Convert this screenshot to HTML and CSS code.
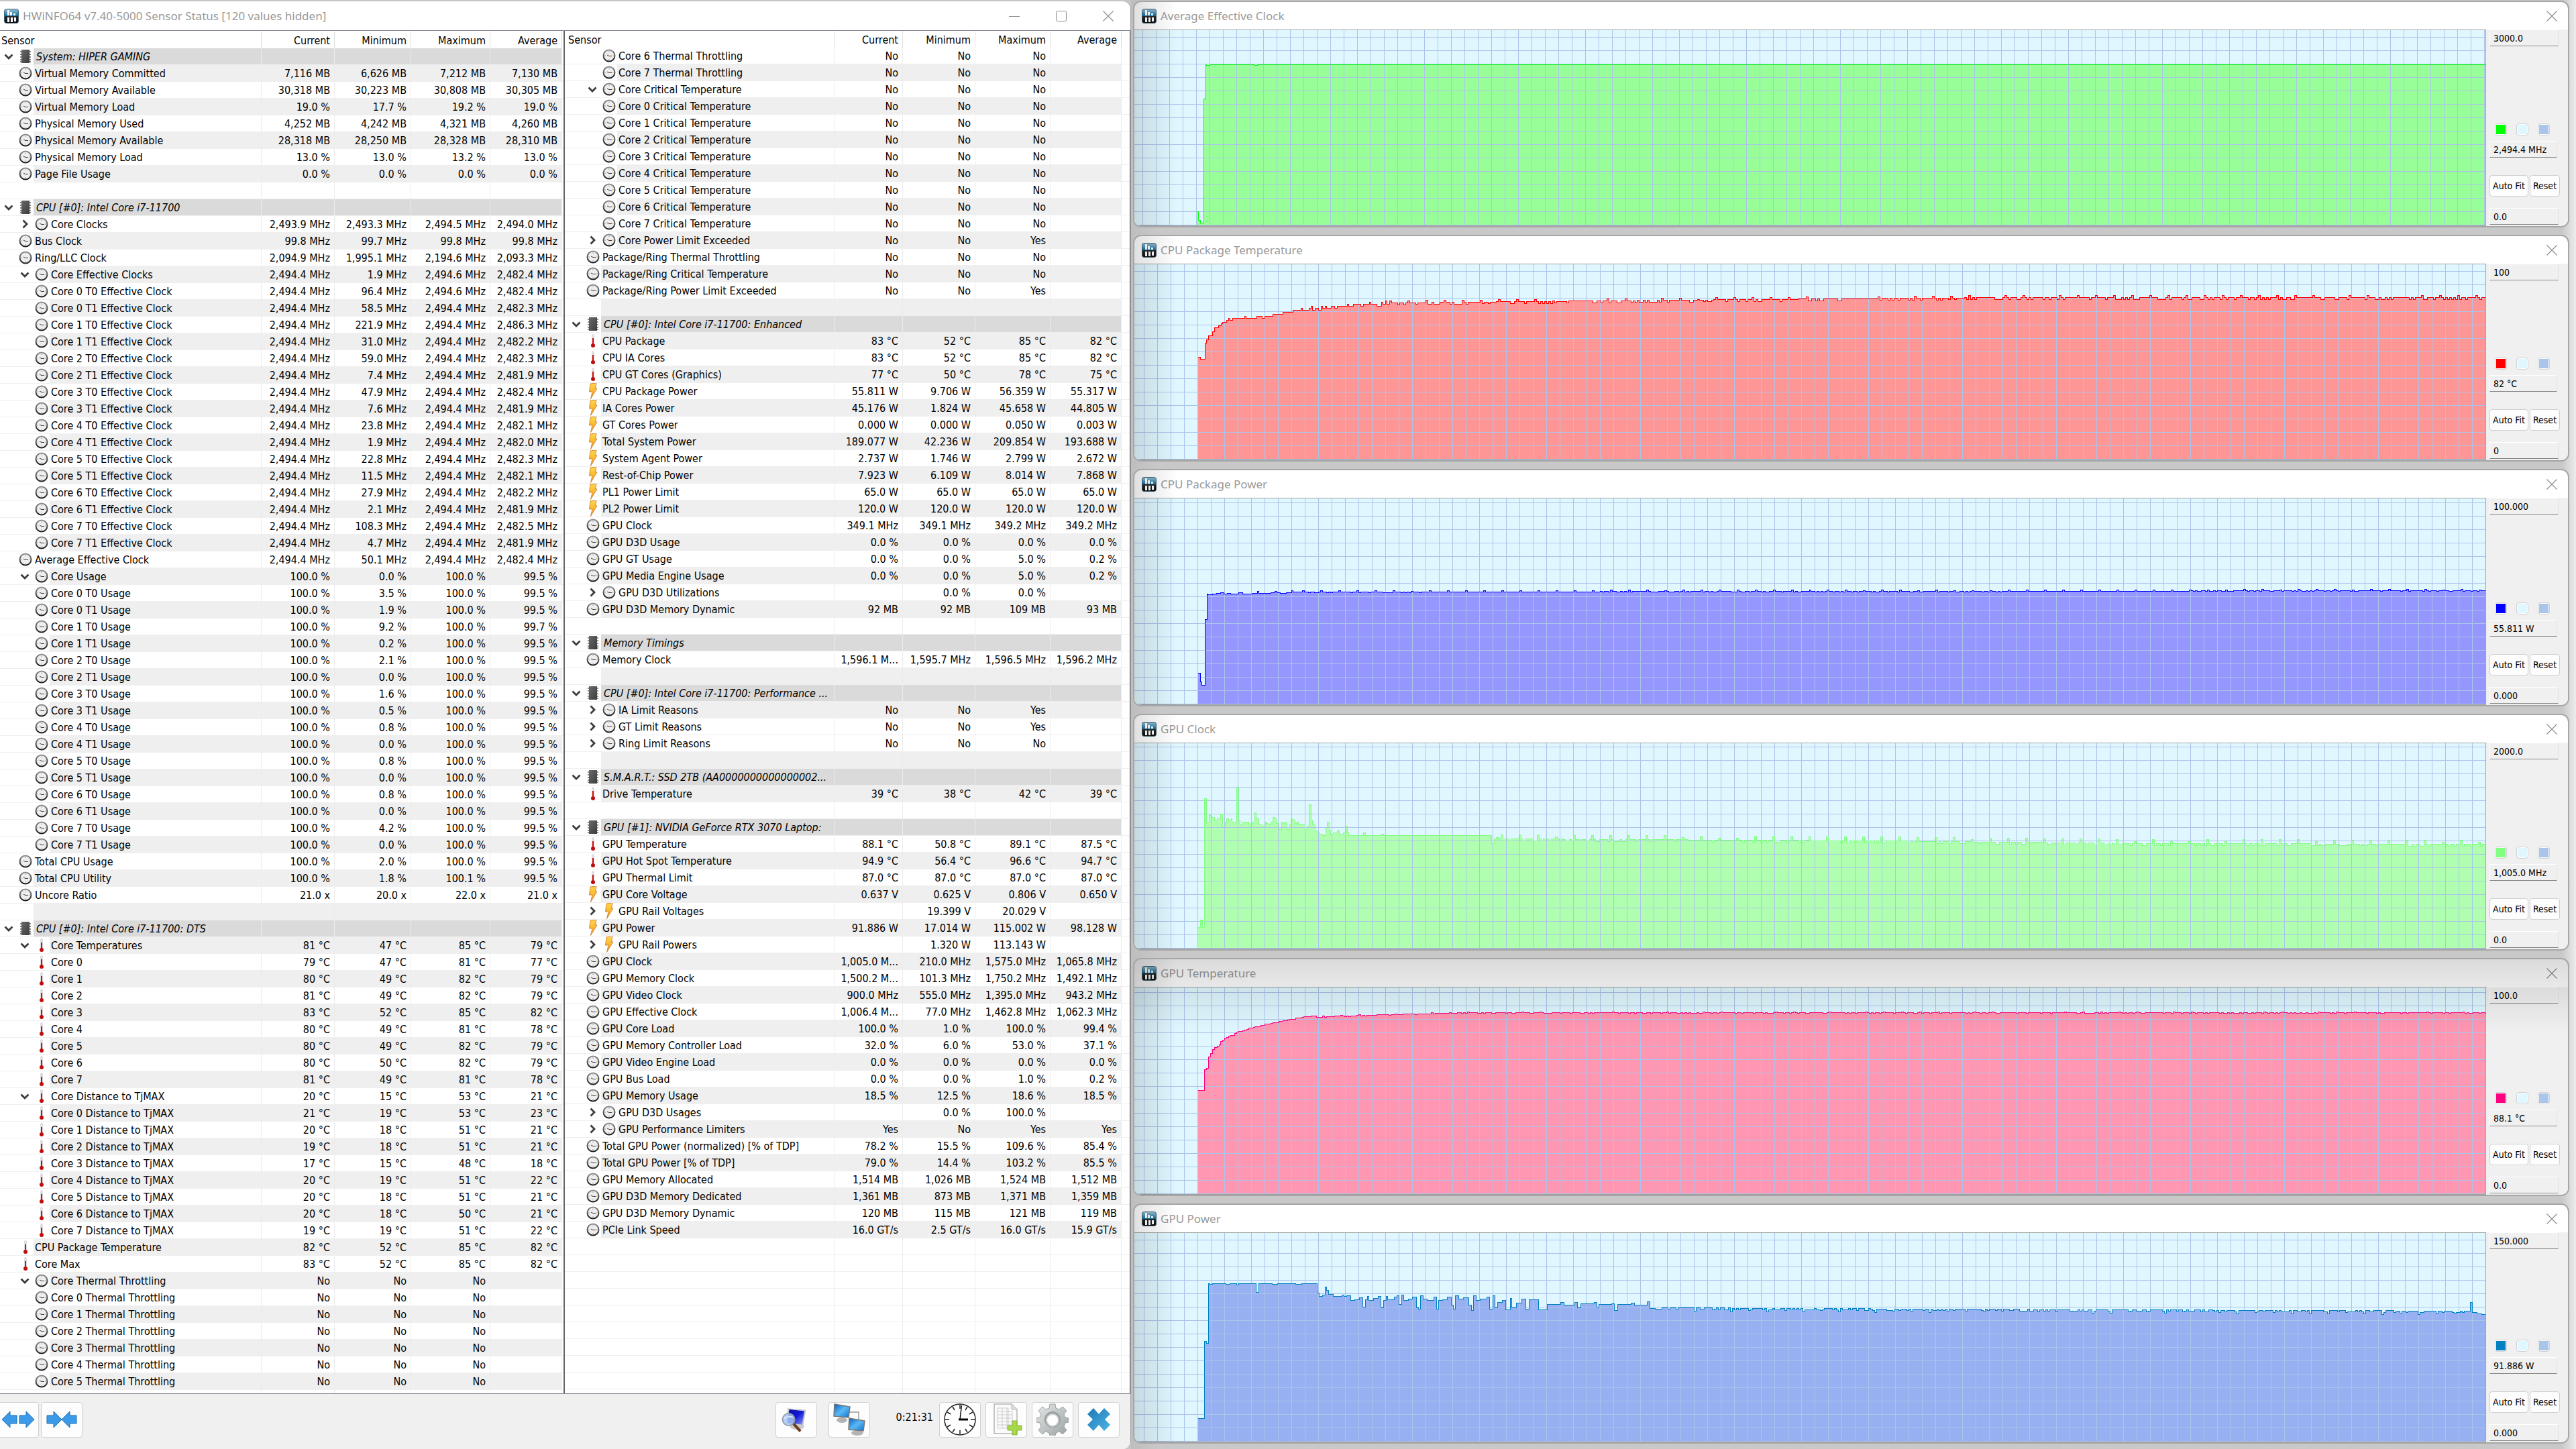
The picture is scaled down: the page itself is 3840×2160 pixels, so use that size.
FILE: index.html
```html
<!DOCTYPE html>
<html lang="en">
<head>
    <meta charset="UTF-8">
    <meta name="viewport" content="width=device-width, initial-scale=1.0">
    <title>HWiNFO64 Sensor Status</title>
    <link rel="stylesheet" href="styles.css">
</head>
<body>
    <svg class="sprite" aria-hidden="true">
        <defs>
            <linearGradient id="g-app" x1="0" y1="0" x2="0" y2="1">
                <stop offset="0" stop-color="#9cc3d8"/><stop offset="0.5" stop-color="#0b6c9c"/>
                <stop offset="0.52" stop-color="#2b2b2b"/><stop offset="1" stop-color="#0c0c0c"/>
            </linearGradient>
            <linearGradient id="g-chip" x1="0" y1="0" x2="1" y2="1">
                <stop offset="0" stop-color="#6a6a6a"/><stop offset="1" stop-color="#3c3c3c"/>
            </linearGradient>
            <linearGradient id="g-bolt" x1="0" y1="0" x2="0" y2="1">
                <stop offset="0" stop-color="#ffd84a"/><stop offset="1" stop-color="#f59a1c"/>
            </linearGradient>
            <linearGradient id="g-rim" x1="0" y1="0" x2="0" y2="1">
                <stop offset="0" stop-color="#8d8d8d"/><stop offset="1" stop-color="#1e1e1e"/>
            </linearGradient>
            <linearGradient id="g-screen" x1="0" y1="0" x2="1" y2="1">
                <stop offset="0" stop-color="#0a5fb8"/><stop offset="0.5" stop-color="#5cb8f4"/><stop offset="1" stop-color="#0d6fd0"/>
            </linearGradient>
            <linearGradient id="g-navy" x1="0" y1="0" x2="1" y2="1">
                <stop offset="0" stop-color="#0a0aa0"/><stop offset="0.5" stop-color="#1418d8"/><stop offset="1" stop-color="#8f9cf4"/>
            </linearGradient>
            <linearGradient id="g-gear" x1="0" y1="0" x2="1" y2="1">
                <stop offset="0" stop-color="#e4e8e8"/><stop offset="1" stop-color="#9aa0a0"/>
            </linearGradient>
            <linearGradient id="g-cross" x1="0" y1="0" x2="1" y2="1">
                <stop offset="0" stop-color="#1f78b4"/><stop offset="1" stop-color="#4cb4e8"/>
            </linearGradient>
        </defs>
        <symbol id="i-app" viewBox="0 0 22 22">
            <rect x="0.5" y="0.5" width="21" height="21" rx="3" fill="url(#g-app)" stroke="#3f6475"/>
            <path d="M5 2h3v8H5zM9 5h3v5H9zM14 7h3v3h-3zM5 13h3v7H5zM10 13h3v7h-3zM15 13h3v6h-3z" fill="#fff"/>
        </symbol>
        <symbol id="i-chip" viewBox="0 0 20 22">
            <path d="M2 4h16M2 8h16M2 12h16M2 16h16M2 19h16" stroke="#8a8a8a" stroke-width="2" stroke-dasharray="2 12 2 0"/>
            <rect x="4" y="1" width="12" height="20" fill="url(#g-chip)"/>
        </symbol>
        <symbol id="i-clock" viewBox="0 0 20 20">
            <circle cx="10" cy="10" r="8.500" fill="#eee" stroke="url(#g-rim)" stroke-width="2"/>
            <path d="M10 3.500v1.500M10 15v1.500M3.500 10H5M15 10h1.500" stroke="#999"/>
            <path d="M7 9l3 1.500h4" fill="none" stroke="#4a3a34"/>
        </symbol>
        <symbol id="i-temp" viewBox="0 0 20 20">
            <rect x="8" y="0" width="4" height="15" rx="2" fill="#dedede"/>
            <rect x="9" y="6" width="2" height="10" fill="#d01010"/>
            <circle cx="10" cy="17" r="3" fill="#c00c0c"/>
        </symbol>
        <symbol id="i-power" viewBox="0 0 20 24">
            <path d="M6 1l9 -1l-1.500 8h2.500L6.500 23.500L9 13H4.500z" fill="url(#g-bolt)" stroke="#c8742a" stroke-width="0.8"/>
        </symbol>
        <symbol id="i-down" viewBox="0 0 14 14">
            <path d="M1.500 4.500L7 10l5.500-5.500" fill="none" stroke="#3c3c3c" stroke-width="2.800"/>
        </symbol>
        <symbol id="i-right" viewBox="0 0 14 14">
            <path d="M4.500 1.500L10 7l-5.500 5.500" fill="none" stroke="#3c3c3c" stroke-width="2.800"/>
        </symbol>
        <symbol id="i-min" viewBox="0 0 16 16"><path d="M0 8.500h16" stroke="#8c8c8c" fill="none"/></symbol>
        <symbol id="i-max" viewBox="0 0 16 16"><rect x="0.500" y="0.500" width="15" height="15" rx="2" stroke="#8c8c8c" fill="none"/></symbol>
        <symbol id="i-close" viewBox="0 0 16 16"><path d="M0.500 0.500l15 15M15.500 0.500l-15 15" stroke="#8c8c8c" stroke-width="1.200" fill="none"/></symbol>
        <symbol id="i-expand" viewBox="0 0 48 28">
            <path d="M0 14L12 2v6h10v12H12v6zM48 14L36 2v6H26v12h10v6z" fill="#3b9be8" stroke="#1c6fb4"/>
        </symbol>
        <symbol id="i-shrink" viewBox="0 0 48 28">
            <path d="M24 14L12 2v6H2v12h10v6zM24 14L36 2v6h10v12H36v6z" fill="#3b9be8" stroke="#1c6fb4"/>
        </symbol>
        <symbol id="i-search" viewBox="0 0 48 48">
            <ellipse cx="29" cy="37" rx="13" ry="5" fill="#ccc"/>
            <path d="M12 4l33 3l-5 29l-30-4z" fill="#c4c8cc"/>
            <path d="M15 6l27 3l-4 24l-26-3z" fill="url(#g-navy)"/>
            <path d="M22 31l13 14" stroke="#6b3f1c" stroke-width="5"/>
            <circle cx="14" cy="24" r="11" fill="#a9c8f2" fill-opacity="0.85" stroke="#8d99a8" stroke-width="2"/>
            <path d="M6 22q8-5 16-2" stroke="#e8f2ff" stroke-width="2" fill="none"/>
        </symbol>
        <symbol id="i-network" viewBox="0 0 48 48">
            <path d="M24 13h14v12" fill="none" stroke="#999" stroke-width="1.500"/>
            <ellipse cx="13" cy="25" rx="8" ry="4" fill="#b4b4b4"/><ellipse cx="36" cy="44" rx="9" ry="4" fill="#b4b4b4"/>
            <path d="M2 1l23 4l-2 16l-22-2z" fill="url(#g-screen)" stroke="#777" stroke-width="1.500"/>
            <path d="M24 22l23 4l-2 15l-22-2z" fill="url(#g-screen)" stroke="#777" stroke-width="1.500"/>
        </symbol>
        <symbol id="i-bigclock" viewBox="0 0 48 48">
            <circle cx="24" cy="24" r="23" fill="#fff" stroke="#222" stroke-width="1.500"/>
            <path d="M24 2v6M24 40v6M2 24h6M40 24h6M13 5l3 5M35 5l-3 5M13 43l3-5M35 43l-3-5M5 13l5 3M43 13l-5 3M5 35l5-3M43 35l-5-3" stroke="#222" stroke-width="1.500"/>
            <path d="M24 24L26.500 3" stroke="#111" stroke-width="1.500"/>
            <path d="M22 24h14" stroke="#000" stroke-width="3"/>
        </symbol>
        <symbol id="i-report" viewBox="0 0 48 48">
            <path d="M6 1h26l8 8v36H6z" fill="#fafafa" stroke="#b4b4b4" stroke-width="1.500"/>
            <path d="M32 1v8h8" fill="#ddd" stroke="#b4b4b4"/>
            <path d="M11 7h16v30H11zM11 12h22M11 17h22M11 22h22M11 27h22M11 32h22M18 7v30M25 7v30M33 12v25" stroke="#ccc" fill="none"/>
            <path d="M33 26h7v7h7v7h-7v7h-7v-7h-7v-7h7z" fill="#a6d84a" stroke="#86b43a"/>
        </symbol>
        <symbol id="i-gear" viewBox="0 0 48 48">
            <path d="M20 1h8l1 6 5 2 5-4 6 6-4 5 2 5 5 1v6l-5 1-2 6 4 5-6 6-5-4-5 2-1 5h-8l-1-5-5-2-5 4-6-6 4-5-2-6-5-1v-6l5-1 2-5-4-5 6-6 5 4 5-2z" fill="url(#g-gear)" stroke="#9aa0a0"/>
            <circle cx="24" cy="24" r="12" fill="#9aa0a0"/>
            <circle cx="24" cy="25" r="9" fill="#fff" stroke="#ccc" stroke-width="2"/>
        </symbol>
        <symbol id="i-cross" viewBox="0 0 36 36">
            <path d="M10 1l8 9l8-9l9 9l-8 8l8 8l-9 9l-8-9l-8 9l-9-9l8-8l-8-8z" fill="url(#g-cross)"/>
        </symbol>
    </svg>

    <main class="desktop">
        <section class="window sensors">
            <header class="titlebar">
                <svg class="app-icon"><use href="#i-app"/></svg>
                <h1>HWiNFO64 v7.40-5000 Sensor Status [120 values hidden]</h1>
                <div class="window-buttons">
                    <button aria-label="Minimize"><svg><use href="#i-min"/></svg></button>
                    <button aria-label="Maximize"><svg><use href="#i-max"/></svg></button>
                    <button aria-label="Close"><svg><use href="#i-close"/></svg></button>
                </div>
            </header>
            <div class="lists">
                <div class="list list-left">
                    <table id="left">
                        <colgroup><col><col class="w109"><col class="w114"><col class="w118"><col class="w107"><col class="w2"></colgroup>
                        <thead><tr><th>Sensor</th><th>Current</th><th>Minimum</th><th>Maximum</th><th>Average</th><th></th></tr></thead>
                        <tbody></tbody>
                    </table>
                </div>
                <div class="list list-right">
                    <table id="right">
                        <colgroup><col><col class="w101"><col class="w108"><col class="w112"><col class="w106"><col class="w12"></colgroup>
                        <thead><tr><th>Sensor</th><th>Current</th><th>Minimum</th><th>Maximum</th><th>Average</th><th></th></tr></thead>
                        <tbody></tbody>
                    </table>
                </div>
            </div>
            <footer class="toolbar">
                <button class="tool tool-first" aria-label="Expand columns"><svg class="arrows"><use href="#i-expand"/></svg></button>
                <button class="tool" aria-label="Shrink columns"><svg class="arrows"><use href="#i-shrink"/></svg></button>
                <span class="spacer"></span>
                <button class="tool tool-search" aria-label="Find"><svg class="mid"><use href="#i-search"/></svg></button>
                <button class="tool tool-network" aria-label="Remote"><svg><use href="#i-network"/></svg></button>
                <time class="elapsed">0:21:31</time>
                <button class="tool" aria-label="Reset clock"><svg><use href="#i-bigclock"/></svg></button>
                <button class="tool" aria-label="Start logging"><svg><use href="#i-report"/></svg></button>
                <button class="tool" aria-label="Settings"><svg><use href="#i-gear"/></svg></button>
                <button class="tool" aria-label="Close"><svg class="small"><use href="#i-cross"/></svg></button>
            </footer>
        </section>
        <div class="graphs" id="graphs"></div>
    </main>

    <script src="data.js"></script>
    <script src="app.js"></script>
</body>
</html>
```
FILE: styles.css
```css
* {
    box-sizing: border-box;
}
body {
    margin: 0;
    font-family: "DejaVu Sans Condensed", "DejaVu Sans", sans-serif;
    font-size: 16px;
    color: #000;
    background-color: #c6c6c6;
}
button, input {
    font: inherit;
    color: inherit;
    margin: 0;
    padding: 0;
}
h1, h2 {
    margin: 0;
    font-family: "Noto Sans", "Open Sans", sans-serif;
    font-size: 17px;
    font-weight: normal;
    color: #999;
}
.sprite {
    position: absolute;
    width: 0;
    height: 0;
}
.desktop {
    display: grid;
    grid-template-columns: 1686fr 2154fr;
    height: 100vh;
}

/* windows */
.window {
    display: flex;
    flex-direction: column;
    min-height: 0;
    background-color: #fff;
    overflow: hidden;
}
.titlebar {
    display: flex;
    align-items: center;
    flex: none;
    height: 43px;
}
.app-icon {
    width: 22px;
    height: 22px;
    margin-right: 6px;
}
.window-buttons {
    display: flex;
    margin-left: auto;
    gap: 54px;
    padding-right: 25px;
}
.window-buttons button {
    display: flex;
    border: none;
    background: none;
}
.window-buttons svg {
    width: 16px;
    height: 16px;
}

/* sensor window */
.sensors {
    margin-top: 2px;
    border-radius: 0 12px 12px 0;
    border-right: 1px solid #a0a0a0;
}
.sensors .titlebar {
    padding-left: 6px;
}
.lists {
    display: grid;
    grid-template-columns: 840fr 845fr;
    flex: 1;
    min-height: 0;
    overflow: hidden;
    border-top: 1px solid #828790;
    border-bottom: 1px solid #828790;
}
.list {
    overflow: hidden;
}
.list-left {
    padding-top: 1px;
}
.list-right {
    border-left: 2px solid #646464;
    border-right: 1px solid #646464;
}
table {
    width: 100%;
    table-layout: fixed;
    border-collapse: separate;
    border-spacing: 0;
}
.w109 { width: 109px; }
.w114 { width: 114px; }
.w118 { width: 118px; }
.w107 { width: 107px; }
.w101 { width: 101px; }
.w108 { width: 108px; }
.w112 { width: 112px; }
.w106 { width: 106px; }
.w12 { width: 12px; }
.w2 { width: 2px; }
th, td {
    height: 25px;
    padding: 2px 6px 0 0;
    border-right: 1px solid #ececec;
    border-bottom: 1px solid #efefef;
    font-weight: normal;
    line-height: 22px;
    text-align: right;
    white-space: nowrap;
    overflow: hidden;
}
th {
    border-right-color: #e0e0e0;
    border-bottom: none;
}
th:first-child {
    padding-left: 2px;
    text-align: left;
}
.list-right th:first-child {
    padding-left: 5px;
}
th:last-child, td:last-child {
    padding: 0;
    border-right: none;
}
.name {
    padding: 0;
    text-align: left;
}
.name div {
    display: flex;
    align-items: center;
    height: 24px;
    padding-left: 1px;
}
.toggle {
    display: flex;
    justify-content: center;
    flex: none;
    width: 27px;
    padding-right: 4px;
    border: none;
    background: none;
}
.toggle svg {
    width: 14px;
    height: 14px;
}
.icon {
    flex: none;
    width: 20px;
    height: 20px;
    margin-right: 2px;
}
.icon.tall {
    height: 24px;
}
.list-right .name div {
    padding-left: 5px;
}
.child .toggle {
    margin-left: 24px;
}
.name span {
    flex: 1;
    height: 25px;
    padding-left: 2px;
    line-height: 26px;
}
.shade td:not(:last-child), .group td:not(:last-child) {
    background-color: #efefef;
}
.group td:not(:last-child) {
    background-color: #dadada;
}
.shade .name, .group .name, .shade td.name:not(:last-child), .group td.name:not(:last-child) {
    background-color: #fff;
}
.shade .name span {
    background-color: #efefef;
}
.group .name span {
    padding-left: 4px;
    font-style: italic;
    background-color: #dadada;
}

/* bottom bar */
.toolbar {
    display: flex;
    align-items: center;
    flex: none;
    gap: 7px;
    height: 82px;
    padding: 0 16px 6px 0;
    background-color: #f0f0f0;
}
.tool {
    display: flex;
    align-items: center;
    justify-content: center;
    width: 62px;
    height: 53px;
    border: 1px solid #d0d0d0;
    border-radius: 4px;
    background-color: #fdfdfd;
}
.tool svg {
    width: 48px;
    height: 48px;
}
.tool svg.arrows {
    height: 28px;
}
.tool svg.mid {
    width: 40px;
    height: 40px;
}
.tool svg.small {
    width: 36px;
    height: 36px;
}
.tool-first {
    width: 58px;
    margin-right: -4px;
    padding-right: 4px;
    border-left: none;
    border-radius: 0 4px 4px 0;
}
.tool-search {
    margin-right: 10px;
    padding-right: 6px;
}
.tool-network {
    margin-right: 32px;
}
.elapsed {
    padding: 0 2px 8px 0;
}
.spacer {
    flex: 1;
}

/* graph windows */
.graphs {
    display: grid;
    grid-template-rows: 338fr 338fr 354fr 353fr 355fr 358fr;
    gap: 11px;
    min-height: 0;
    padding: 1px 10px 8px 3px;
    background: linear-gradient(90deg, #bebebe, #c8c8c8 2%, #c8c8c8 99%, #ececec);
}
.graph {
    position: relative;
    border: 2px solid #a6a6a6;
    border-radius: 12px;
}
/* shadow that the neighbouring windows cast */
.graph::after {
    content: "";
    position: absolute;
    inset: 0;
    background: linear-gradient(90deg, rgba(0, 0, 0, 0.12), rgba(0, 0, 0, 0) 3%);
    pointer-events: none;
}
.graph.behind::after {
    background: linear-gradient(90deg, rgba(0, 0, 0, 0.12), rgba(0, 0, 0, 0) 3%), linear-gradient(rgba(0, 0, 0, 0.14), rgba(0, 0, 0, 0) 110px);
}
.graph .titlebar {
    height: 41px;
    padding-left: 11px;
}
.graph .window-buttons {
    padding-right: 16px;
}
.graph-body {
    display: flex;
    flex: 1;
    min-height: 0;
    background-color: #f0f0f0;
}
.plot {
    flex: 1;
    min-width: 0;
    overflow: hidden;
    border: 1px solid #a0a0a0;
    border-left: none;
    background-color: #e0f7ff;
}
.plot svg {
    display: block;
}
.grid {
    stroke: #abc4ea;
    fill: none;
}
.line {
    fill: none;
    stroke-width: 1;
}
.panel {
    display: flex;
    flex-direction: column;
    flex: none;
    width: 122px;
    padding: 0 12px 2px 5px;
    font-size: 14px;
}
.panel input {
    width: 103px;
    height: 25px;
    padding-left: 5px;
    border: 1px solid #e3e3e3;
    border-top-color: #fff;
    border-left-color: #fff;
    border-bottom-color: #888;
    border-radius: 0;
    background-color: #f0f0f0;
}
.panel .value {
    width: 101px;
    margin-bottom: 26px;
}
.swatches {
    display: flex;
    gap: 14px;
    margin: auto 0 8px 8px;
}
.swatches button {
    width: 18px;
    height: 18px;
    border: 1px solid #d0d0d0;
    border-radius: 4px;
    background-color: #fff;
    padding: 1px;
}
.swatches i {
    display: block;
    height: 100%;
}
.actions {
    display: flex;
    gap: 2px;
    margin-bottom: 17px;
}
.actions button {
    width: 58px;
    height: 32px;
    border: 1px solid #d0d0d0;
    border-radius: 4px;
    background-color: #fdfdfd;
}
.actions .reset {
    width: 45px;
}
```
FILE: data.js
```js
// one sensor per line: kind, name, current, minimum, maximum, average
// kind: # group, c clock, t temperature, p power; 2 = child; v open, > closed; "hidden" still counts for striping
var leftRows = `#|System: HIPER GAMING
c|Virtual Memory Committed|7,116 MB|6,626 MB|7,212 MB|7,130 MB
c|Virtual Memory Available|30,318 MB|30,223 MB|30,808 MB|30,305 MB
c|Virtual Memory Load|19.0 %|17.7 %|19.2 %|19.0 %
c|Physical Memory Used|4,252 MB|4,242 MB|4,321 MB|4,260 MB
c|Physical Memory Available|28,318 MB|28,250 MB|28,328 MB|28,310 MB
c|Physical Memory Load|13.0 %|13.0 %|13.2 %|13.0 %
c|Page File Usage|0.0 %|0.0 %|0.0 %|0.0 %

#|CPU [#0]: Intel Core i7-11700
c2>|Core Clocks|2,493.9 MHz|2,493.3 MHz|2,494.5 MHz|2,494.0 MHz
c|Bus Clock|99.8 MHz|99.7 MHz|99.8 MHz|99.8 MHz
c|Ring/LLC Clock|2,094.9 MHz|1,995.1 MHz|2,194.6 MHz|2,093.3 MHz
c2v|Core Effective Clocks|2,494.4 MHz|1.9 MHz|2,494.6 MHz|2,482.4 MHz
c2|Core 0 T0 Effective Clock|2,494.4 MHz|96.4 MHz|2,494.6 MHz|2,482.4 MHz
c2|Core 0 T1 Effective Clock|2,494.4 MHz|58.5 MHz|2,494.4 MHz|2,482.3 MHz
c2|Core 1 T0 Effective Clock|2,494.4 MHz|221.9 MHz|2,494.4 MHz|2,486.3 MHz
c2|Core 1 T1 Effective Clock|2,494.4 MHz|31.0 MHz|2,494.4 MHz|2,482.2 MHz
c2|Core 2 T0 Effective Clock|2,494.4 MHz|59.0 MHz|2,494.4 MHz|2,482.3 MHz
c2|Core 2 T1 Effective Clock|2,494.4 MHz|7.4 MHz|2,494.4 MHz|2,481.9 MHz
c2|Core 3 T0 Effective Clock|2,494.4 MHz|47.9 MHz|2,494.4 MHz|2,482.4 MHz
c2|Core 3 T1 Effective Clock|2,494.4 MHz|7.6 MHz|2,494.4 MHz|2,481.9 MHz
c2|Core 4 T0 Effective Clock|2,494.4 MHz|23.8 MHz|2,494.4 MHz|2,482.1 MHz
c2|Core 4 T1 Effective Clock|2,494.4 MHz|1.9 MHz|2,494.4 MHz|2,482.0 MHz
c2|Core 5 T0 Effective Clock|2,494.4 MHz|22.8 MHz|2,494.4 MHz|2,482.3 MHz
c2|Core 5 T1 Effective Clock|2,494.4 MHz|11.5 MHz|2,494.4 MHz|2,482.1 MHz
c2|Core 6 T0 Effective Clock|2,494.4 MHz|27.9 MHz|2,494.4 MHz|2,482.2 MHz
c2|Core 6 T1 Effective Clock|2,494.4 MHz|2.1 MHz|2,494.4 MHz|2,481.9 MHz
c2|Core 7 T0 Effective Clock|2,494.4 MHz|108.3 MHz|2,494.4 MHz|2,482.5 MHz
c2|Core 7 T1 Effective Clock|2,494.4 MHz|4.7 MHz|2,494.4 MHz|2,481.9 MHz
c|Average Effective Clock|2,494.4 MHz|50.1 MHz|2,494.4 MHz|2,482.4 MHz
c2v|Core Usage|100.0 %|0.0 %|100.0 %|99.5 %
c2|Core 0 T0 Usage|100.0 %|3.5 %|100.0 %|99.5 %
c2|Core 0 T1 Usage|100.0 %|1.9 %|100.0 %|99.5 %
c2|Core 1 T0 Usage|100.0 %|9.2 %|100.0 %|99.7 %
c2|Core 1 T1 Usage|100.0 %|0.2 %|100.0 %|99.5 %
c2|Core 2 T0 Usage|100.0 %|2.1 %|100.0 %|99.5 %
c2|Core 2 T1 Usage|100.0 %|0.0 %|100.0 %|99.5 %
c2|Core 3 T0 Usage|100.0 %|1.6 %|100.0 %|99.5 %
c2|Core 3 T1 Usage|100.0 %|0.5 %|100.0 %|99.5 %
c2|Core 4 T0 Usage|100.0 %|0.8 %|100.0 %|99.5 %
c2|Core 4 T1 Usage|100.0 %|0.0 %|100.0 %|99.5 %
c2|Core 5 T0 Usage|100.0 %|0.8 %|100.0 %|99.5 %
c2|Core 5 T1 Usage|100.0 %|0.0 %|100.0 %|99.5 %
c2|Core 6 T0 Usage|100.0 %|0.8 %|100.0 %|99.5 %
c2|Core 6 T1 Usage|100.0 %|0.0 %|100.0 %|99.5 %
c2|Core 7 T0 Usage|100.0 %|4.2 %|100.0 %|99.5 %
c2|Core 7 T1 Usage|100.0 %|0.0 %|100.0 %|99.5 %
c|Total CPU Usage|100.0 %|2.0 %|100.0 %|99.5 %
c|Total CPU Utility|100.0 %|1.8 %|100.1 %|99.5 %
c|Uncore Ratio|21.0 x|20.0 x|22.0 x|21.0 x

#|CPU [#0]: Intel Core i7-11700: DTS
t2v|Core Temperatures|81 °C|47 °C|85 °C|79 °C
t2|Core 0|79 °C|47 °C|81 °C|77 °C
t2|Core 1|80 °C|49 °C|82 °C|79 °C
t2|Core 2|81 °C|49 °C|82 °C|79 °C
t2|Core 3|83 °C|52 °C|85 °C|82 °C
t2|Core 4|80 °C|49 °C|81 °C|78 °C
t2|Core 5|80 °C|49 °C|82 °C|79 °C
t2|Core 6|80 °C|50 °C|82 °C|79 °C
t2|Core 7|81 °C|49 °C|81 °C|78 °C
t2v|Core Distance to TjMAX|20 °C|15 °C|53 °C|21 °C
t2|Core 0 Distance to TjMAX|21 °C|19 °C|53 °C|23 °C
t2|Core 1 Distance to TjMAX|20 °C|18 °C|51 °C|21 °C
t2|Core 2 Distance to TjMAX|19 °C|18 °C|51 °C|21 °C
t2|Core 3 Distance to TjMAX|17 °C|15 °C|48 °C|18 °C
t2|Core 4 Distance to TjMAX|20 °C|19 °C|51 °C|22 °C
t2|Core 5 Distance to TjMAX|20 °C|18 °C|51 °C|21 °C
t2|Core 6 Distance to TjMAX|20 °C|18 °C|50 °C|21 °C
t2|Core 7 Distance to TjMAX|19 °C|19 °C|51 °C|22 °C
t|CPU Package Temperature|82 °C|52 °C|85 °C|82 °C
t|Core Max|83 °C|52 °C|85 °C|82 °C
c2v|Core Thermal Throttling|No|No|No|
c2|Core 0 Thermal Throttling|No|No|No|
c2|Core 1 Thermal Throttling|No|No|No|
c2|Core 2 Thermal Throttling|No|No|No|
c2|Core 3 Thermal Throttling|No|No|No|
c2|Core 4 Thermal Throttling|No|No|No|
c2|Core 5 Thermal Throttling|No|No|No|`;

var rightRows = `c2|Core 6 Thermal Throttling|No|No|No|
c2|Core 7 Thermal Throttling|No|No|No|
c2v|Core Critical Temperature|No|No|No|
c2|Core 0 Critical Temperature|No|No|No|
c2|Core 1 Critical Temperature|No|No|No|
c2|Core 2 Critical Temperature|No|No|No|
c2|Core 3 Critical Temperature|No|No|No|
c2|Core 4 Critical Temperature|No|No|No|
c2|Core 5 Critical Temperature|No|No|No|
c2|Core 6 Critical Temperature|No|No|No|
c2|Core 7 Critical Temperature|No|No|No|
c2>|Core Power Limit Exceeded|No|No|Yes|
c|Package/Ring Thermal Throttling|No|No|No|
c|Package/Ring Critical Temperature|No|No|No|
c|Package/Ring Power Limit Exceeded|No|No|Yes|

#|CPU [#0]: Intel Core i7-11700: Enhanced
t|CPU Package|83 °C|52 °C|85 °C|82 °C
t|CPU IA Cores|83 °C|52 °C|85 °C|82 °C
t|CPU GT Cores (Graphics)|77 °C|50 °C|78 °C|75 °C
p|CPU Package Power|55.811 W|9.706 W|56.359 W|55.317 W
p|IA Cores Power|45.176 W|1.824 W|45.658 W|44.805 W
p|GT Cores Power|0.000 W|0.000 W|0.050 W|0.003 W
p|Total System Power|189.077 W|42.236 W|209.854 W|193.688 W
p|System Agent Power|2.737 W|1.746 W|2.799 W|2.672 W
p|Rest-of-Chip Power|7.923 W|6.109 W|8.014 W|7.868 W
p|PL1 Power Limit|65.0 W|65.0 W|65.0 W|65.0 W
p|PL2 Power Limit|120.0 W|120.0 W|120.0 W|120.0 W
c|GPU Clock|349.1 MHz|349.1 MHz|349.2 MHz|349.2 MHz
c|GPU D3D Usage|0.0 %|0.0 %|0.0 %|0.0 %
c|GPU GT Usage|0.0 %|0.0 %|5.0 %|0.2 %
c|GPU Media Engine Usage|0.0 %|0.0 %|5.0 %|0.2 %
c2>|GPU D3D Utilizations||0.0 %|0.0 %|
c|GPU D3D Memory Dynamic|92 MB|92 MB|109 MB|93 MB

#|Memory Timings
c|Memory Clock|1,596.1 M...|1,595.7 MHz|1,596.5 MHz|1,596.2 MHz

#|CPU [#0]: Intel Core i7-11700: Performance ...
c2>|IA Limit Reasons|No|No|Yes|
c2>|GT Limit Reasons|No|No|Yes|
hidden
c2>|Ring Limit Reasons|No|No|No|

#|S.M.A.R.T.: SSD 2TB (AA0000000000000002...
t|Drive Temperature|39 °C|38 °C|42 °C|39 °C

#|GPU [#1]: NVIDIA GeForce RTX 3070 Laptop:
t|GPU Temperature|88.1 °C|50.8 °C|89.1 °C|87.5 °C
t|GPU Hot Spot Temperature|94.9 °C|56.4 °C|96.6 °C|94.7 °C
t|GPU Thermal Limit|87.0 °C|87.0 °C|87.0 °C|87.0 °C
p|GPU Core Voltage|0.637 V|0.625 V|0.806 V|0.650 V
p2>|GPU Rail Voltages||19.399 V|20.029 V|
p|GPU Power|91.886 W|17.014 W|115.002 W|98.128 W
p2>|GPU Rail Powers||1.320 W|113.143 W|
c|GPU Clock|1,005.0 M...|210.0 MHz|1,575.0 MHz|1,065.8 MHz
c|GPU Memory Clock|1,500.2 M...|101.3 MHz|1,750.2 MHz|1,492.1 MHz
c|GPU Video Clock|900.0 MHz|555.0 MHz|1,395.0 MHz|943.2 MHz
c|GPU Effective Clock|1,006.4 M...|77.0 MHz|1,462.8 MHz|1,062.3 MHz
c|GPU Core Load|100.0 %|1.0 %|100.0 %|99.4 %
c|GPU Memory Controller Load|32.0 %|6.0 %|53.0 %|37.1 %
c|GPU Video Engine Load|0.0 %|0.0 %|0.0 %|0.0 %
c|GPU Bus Load|0.0 %|0.0 %|1.0 %|0.2 %
c|GPU Memory Usage|18.5 %|12.5 %|18.6 %|18.5 %
c2>|GPU D3D Usages||0.0 %|100.0 %|
c2>|GPU Performance Limiters|Yes|No|Yes|Yes
c|Total GPU Power (normalized) [% of TDP]|78.2 %|15.5 %|109.6 %|85.4 %
c|Total GPU Power [% of TDP]|79.0 %|14.4 %|103.2 %|85.5 %
c|GPU Memory Allocated|1,514 MB|1,026 MB|1,524 MB|1,512 MB
c|GPU D3D Memory Dedicated|1,361 MB|873 MB|1,371 MB|1,359 MB
c|GPU D3D Memory Dynamic|120 MB|115 MB|121 MB|119 MB
c|PCIe Link Speed|16.0 GT/s|2.5 GT/s|16.0 GT/s|15.9 GT/s`;

// start: measured steps "x,height"; tail: base level at given x, jitter and a spike every 27px
var graphs = [
    {
        title: "Average Effective Clock", max: "3000.0", value: "2,494.4 MHz", min: "0.0",
        line: "#00ff00", fill: "#98ff98", gridX: 12,
        start: "93,21 95,8 98,4 103,189 106,240 107,239 112,240 179,239 183,240",
        tail: { from: 186, base: [[186, 240], [2015, 240]], jitter: 0, spike: 0 }
    },
    {
        title: "CPU Package Temperature", max: "100", value: "82 °C", min: "0",
        line: "#ff0000", fill: "#ff9696", gridX: 14,
        start: "95,153 98,150 105,174 107,179 110,185 116,191 119,197 125,200 129,203 131,205 137,208 140,211 142,208 146,211 164,214 166,211 182,214 190,211 194,214 206,217 221,220 236,223 248,226 250,223 260,226 263,229 265,223 269,226 274,223 278,229 280,226 284,229 286,226 293,229 298,226 302,229 317,232 319,229 326,232 337,229 341,232 350,235 352,232 361,229 368,235 370,232 374,237 376,232",
        tail: { from: 380, base: [[380, 234], [800, 238], [1300, 242], [2015, 242]], jitter: 4, spike: 3 }
    },
    {
        title: "CPU Package Power", max: "100.000", value: "55.811 W", min: "0.000",
        line: "#0000ff", fill: "#9696ff", gridX: 14,
        start: "95,47 98,34 100,29 105,127 108,165 109,164 116,165 122,166 128,167 133,165 138,166 143,165 155,167 161,165 176,166 183,169 185,166 203,167 209,169 212,167 217,166 226,167 234,170 236,168",
        tail: { from: 250, base: [[250, 168], [2015, 170]], jitter: 1, spike: 2 }
    },
    {
        title: "GPU Clock", max: "2000.0", value: "1,005.0 MHz", min: "0.0",
        line: "#80ff80", fill: "#b0ffb0", gridX: 14,
        start: "95,32 98,43 101,32 104,224 107,189 111,201 112,199 115,196 119,192 123,194 128,201 131,183 135,189 137,194 140,192 144,194 145,189 152,240 155,192 157,185 161,189 170,183 173,187 176,189 179,203 181,194 185,185 190,183 195,189 197,187 199,185 203,189 206,196 209,194 211,187 215,178 219,189 221,187 224,189 227,178 231,185 233,194 236,192 239,187 242,189 244,185 254,178 257,183 260,215 263,192 265,185 269,176 272,173 276,171 281,169 285,180 287,189 290,176 292,171 296,173 302,176 305,171 311,173 315,183 317,173 319,169 341,173 344,169 368,171 371,169 532,157 536,164 539,166 543,164",
        tail: { from: 546, base: [[546, 164], [1100, 161], [1500, 157], [2015, 156]], jitter: 4, spike: 6 }
    },
    {
        title: "GPU Temperature", max: "100.0", value: "88.1 °C", min: "0.0", behind: true,
        line: "#ff0080", fill: "#ff96b2", gridX: 14,
        start: "95,155 104,186 107,188 110,205 113,210 116,216 119,219 123,221 126,223 128,228 131,230 134,233 137,234 140,236 143,237 149,240 152,242 155,243 161,244 164,245 167,246 170,248 177,249 179,250 188,252 194,254 203,255 206,256 215,258 221,259 228,260 231,261 240,263 249,264 252,265 263,266 271,264",
        tail: { from: 280, base: [[280, 265], [380, 268], [500, 271], [2015, 271]], jitter: 1, spike: 1 }
    },
    {
        title: "GPU Power", max: "150.000", value: "91.886 W", min: "0.000",
        line: "#0080c0", fill: "#96b0f2", gridX: 14,
        start: "95,35 104,150 107,147 110,236 112,235 116,236 136,235 142,236 152,234 155,236 181,223 185,236 205,235 213,236 240,235 249,236 272,222 275,217 280,219 284,231 286,226 289,220 296,217 309,219 312,217 316,218 322,211 328,212 335,215 340,201 344,212 347,217 349,211 356,214 363,217 367,200 371,211 375,217 377,212 387,216 391,218 394,205 398,219 401,211 408,213 414,216 420,200 423,198 426,218 430,213 436,211 446,216 450,198 453,211 459,212 466,216 472,204 475,198 478,218 483,213 490,215 498,204 502,196 505,218 509,211 515,213 525,216 529,198 534,218 537,200 541,208 548,211 553,197 560,214 562,200 569,207 577,213 583,198 588,212 602,197 615,205 635,208 640,204 656,208 660,200 665,206 685,208 689,201 692,205 711,206 715,196 720,205 740,207 745,204 764,209 768,199 776,198",
        tail: { from: 780, base: [[780, 200], [1200, 198], [2015, 195]], jitter: 3, spike: -3, last: "1992,208 1995,193 2002,191 2009,190" }
    }
];
```
FILE: app.js
```js
var icons = { c: "clock", t: "temp", p: "power", "#": "chip" };

function use(id, cls) {
    return '<svg class="' + cls + '"><use href="#i-' + id + '"/></svg>';
}

function nameCell(kind, label) {
    var type = kind.charAt(0);
    var open = kind.indexOf("v") > 0 || type == "#";
    var toggle = '<i class="toggle"></i>';
    if (open || kind.indexOf(">") > 0) {
        toggle = '<button class="toggle" aria-label="Toggle ' + label + '">' + use(open ? "down" : "right", "") + "</button>";
    }
    var tall = type == "p" || type == "#" ? " tall" : "";
    return "<div>" + toggle + use(icons[type], "icon" + tall) + "<span>" + label + "</span></div>";
}

function fillTable(id, text, total) {
    var html = "";
    var stripe = 0;
    var count = 0;
    text.split("\n").forEach(function (line) {
        if (line == "hidden") {
            stripe++;
            return;
        }
        var parts = line.split("|");
        var cls = stripe % 2 ? "shade" : "";
        var name = '<div><i class="toggle"></i><i class="icon"></i><span></span></div>';
        if (line) {
            name = nameCell(parts[0], parts[1]);
            if (parts[0] == "#") cls = "group";
            if (parts[0].indexOf("2") > 0) cls += " child";
        }
        html += '<tr class="' + cls + '"><td class="name">' + name + "</td>";
        for (var i = 2; i < 6; i++) {
            html += "<td>" + (parts[i] || "") + "</td>";
        }
        html += "<td></td></tr>";
        stripe++;
        count++;
    });
    while (count++ < total) {
        html += "<tr><td></td><td></td><td></td><td></td><td></td><td></td></tr>";
    }
    document.querySelector("#" + id + " tbody").innerHTML = html;
}

function parseSteps(text) {
    return text.split(" ").map(function (p) {
        return p.split(",").map(Number);
    });
}

function level(base, x) {
    for (var i = 1; i < base.length; i++) {
        if (x <= base[i][0]) {
            var a = base[i - 1], b = base[i];
            return a[1] + (b[1] - a[1]) * (x - a[0]) / (b[0] - a[0]);
        }
    }
    return base[base.length - 1][1];
}

function samples(g, index) {
    var points = parseSteps(g.start);
    var t = g.tail;
    var last = t.last ? parseSteps(t.last) : [];
    var end = last.length ? last[0][0] : 2015;
    var seed = 7 + index * 31;
    for (var x = t.from; x < end; x += 3) {
        seed = (seed * 1103515245 + 12345) % 2147483648;
        var h = level(t.base, x);
        if (t.jitter && seed / 2147483648 > 0.7) h -= t.jitter * 0.7;
        if ((x - t.from) % 27 == 0) h += t.spike;
        points.push([x, Math.round(h)]);
    }
    return points.concat(last);
}

function drawPlot(el, g, index) {
    var w = el.clientWidth, h = el.clientHeight;
    var points = samples(g, index);
    var scale = w / 2015;
    var d = "M" + Math.round(points[0][0] * scale) + " " + (h - points[0][1]);
    var path = d;
    points.slice(1).forEach(function (p) {
        path += "H" + Math.round(p[0] * scale) + "V" + (h - p[1]);
    });
    path += "H" + w;
    var grid = "";
    for (var x = g.gridX; x < w; x += 20) grid += "M" + x + " 0V" + h;
    for (var y = h - 1; y > 0; y -= 20) grid += "M0 " + y + "H" + w;
    el.innerHTML = '<svg width="' + w + '" height="' + h + '" shape-rendering="crispEdges">' +
        '<path d="' + path + "V" + h + "H" + Math.round(points[0][0] * scale) + 'z" fill="' + g.fill + '"/>' +
        '<path class="grid" d="' + grid + '"/>' +
        '<path class="line" d="' + path + '" stroke="' + g.line + '"/></svg>';
}

function buildGraphs() {
    document.getElementById("graphs").innerHTML = graphs.map(function (g) {
        return '<section class="window graph' + (g.behind ? " behind" : "") + '">' +
            '<header class="titlebar">' + use("app", "app-icon") + "<h2>" + g.title + "</h2>" +
            '<div class="window-buttons"><button aria-label="Close">' + use("close", "") + "</button></div></header>" +
            '<div class="graph-body"><div class="plot"></div><div class="panel">' +
            '<input type="text" aria-label="Maximum" value="' + g.max + '">' +
            '<div class="swatches"><button aria-label="Line colour"><i style="background-color:' + g.line + '"></i></button>' +
            '<button aria-label="Background colour"><i style="background-color:#e0f7ff"></i></button>' +
            '<button aria-label="Grid colour"><i style="background-color:#abc4ea"></i></button></div>' +
            '<input class="value" type="text" readonly aria-label="Current value" value="' + g.value + '">' +
            '<div class="actions"><button>Auto Fit</button><button class="reset">Reset</button></div>' +
            '<input type="text" aria-label="Minimum" value="' + g.min + '">' +
            "</div></div></section>";
    }).join("");
}

function drawGraphs() {
    var plots = document.querySelectorAll(".plot");
    for (var i = 0; i < plots.length; i++) {
        plots[i].innerHTML = "";
        drawPlot(plots[i], graphs[i], i);
    }
}

fillTable("left", leftRows, 81);
fillTable("right", rightRows, 81);
buildGraphs();
drawGraphs();
window.addEventListener("resize", drawGraphs);
```
